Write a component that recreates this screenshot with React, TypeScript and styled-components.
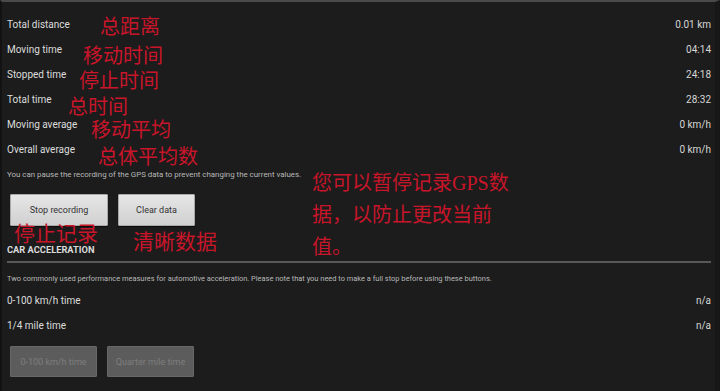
import React from "react";
import styled, { createGlobalStyle } from "styled-components";

const Global = createGlobalStyle`
  html, body { margin: 0; padding: 0; background: #1c1c1c; }
  body { font-family: Roboto, "Liberation Sans", sans-serif; }
`;

const Page = styled.div`
  position: relative;
  width: 720px;
  height: 391px;
  box-sizing: border-box;
  background: #1c1c1c;
  border-top: 2px solid #4a4a4a;
  border-left: 2px solid #121212;
  border-right: 5px solid #171717;
  padding: 10px 4px 0 5px;
  overflow: hidden;
  display: flex;
  flex-direction: column;
`;

const Row = styled.div<{ $top?: number }>`
  margin-top: ${(p) => p.$top ?? 0}px;
  height: 25px;
  display: flex;
  align-items: center;
  justify-content: space-between;
  font-size: 10px;
  color: #dcdcdc;
`;

const Value = styled.span`
  color: #d6d6d6;
`;

const Note = styled.div<{ $top: number; $size: number }>`
  margin-top: ${(p) => p.$top}px;
  height: 12px;
  line-height: 12px;
  font-size: ${(p) => p.$size}px;
  color: #b8b8b8;
  white-space: nowrap;
`;

const ButtonRow = styled.div<{ $top: number }>`
  margin-top: ${(p) => p.$top}px;
  margin-left: 3px;
  display: flex;
  gap: 10px;
`;

const Button = styled.button<{ $w: number; $disabled?: boolean }>`
  width: ${(p) => p.$w}px;
  height: ${(p) => (p.$disabled ? 31 : 32)}px;
  box-sizing: border-box;
  border: 1px solid ${(p) => (p.$disabled ? "#676767" : "#a9a9a9")};
  background: ${(p) =>
    p.$disabled ? "#5c5c5c" : "linear-gradient(#e6e6e6, #d0d0d0)"};
  color: ${(p) => (p.$disabled ? "#7e7e7e" : "#333")};
  font-family: Roboto, "Liberation Sans", sans-serif;
  font-size: 9px;
  padding: 0;
  border-radius: 1px;
  box-shadow: ${(p) => (p.$disabled ? "none" : "0 1px 1px rgba(0,0,0,0.6)")};
`;

const SectionHeader = styled.div`
  margin-top: 18px;
  height: 12px;
  line-height: 12px;
  font-size: 9.3px;
  font-weight: 700;
  color: #dadada;
`;

const Divider = styled.div`
  margin-top: 5px;
  height: 2px;
  background: #585858;
`;

const Annotation = styled.div<{ $x: number; $y: number; $size: number }>`
  position: absolute;
  left: ${(p) => p.$x}px;
  top: ${(p) => p.$y}px;
  font-family: "Liberation Serif", "Noto Sans CJK SC", serif;
  font-size: ${(p) => p.$size}px;
  line-height: 1;
  color: #c8152a;
  white-space: nowrap;
`;

const Paragraph = styled(Annotation)`
  line-height: 32px;
`;

const stats = [
  ["Total distance", "0.01 km"],
  ["Moving time", "04:14"],
  ["Stopped time", "24:18"],
  ["Total time", "28:32"],
  ["Moving average", "0 km/h"],
  ["Overall average", "0 km/h"],
];

const labels: [string, number, number, number][] = [
  ["总距离", 98, 15, 20],
  ["移动时间", 81, 44, 20],
  ["停止时间", 77, 69, 20],
  ["总时间", 66, 95, 20],
  ["移动平均", 89, 118, 20],
  ["总体平均数", 96, 145, 20],
  ["停止记录", 12, 222, 21],
  ["清晰数据", 131, 230, 21],
];

export default function App() {
  return (
    <>
      <Global />
      <Page>
        {stats.map(([k, v]) => (
          <Row key={k}>
            <span>{k}</span>
            <Value>{v}</Value>
          </Row>
        ))}
        <Note $top={7} $size={7.9}>
          You can pause the recording of the GPS data to prevent changing the current values.
        </Note>
        <ButtonRow $top={13}>
          <Button $w={98}>Stop recording</Button>
          <Button $w={77}>Clear data</Button>
        </ButtonRow>
        <SectionHeader>CAR ACCELERATION</SectionHeader>
        <Divider />
        <Note $top={10} $size={7.45}>
          Two commonly used performance measures for automotive acceleration. Please note that you need to make a full stop before using these buttons.
        </Note>
        <Row $top={3}>
          <span>0-100 km/h time</span>
          <Value>n/a</Value>
        </Row>
        <Row>
          <span>1/4 mile time</span>
          <Value>n/a</Value>
        </Row>
        <ButtonRow $top={8}>
          <Button $w={87} $disabled>0-100 km/h time</Button>
          <Button $w={87} $disabled>Quarter mile time</Button>
        </ButtonRow>
        {labels.map(([t, x, y, s]) => (
          <Annotation key={t} $x={x} $y={y} $size={s}>
            {t}
          </Annotation>
        ))}
        <Paragraph $x={310} $y={165} $size={20}>
          您可以暂停记录GPS数
          <br />
          据，以防止更改当前
          <br />
          值。
        </Paragraph>
      </Page>
    </>
  );
}
